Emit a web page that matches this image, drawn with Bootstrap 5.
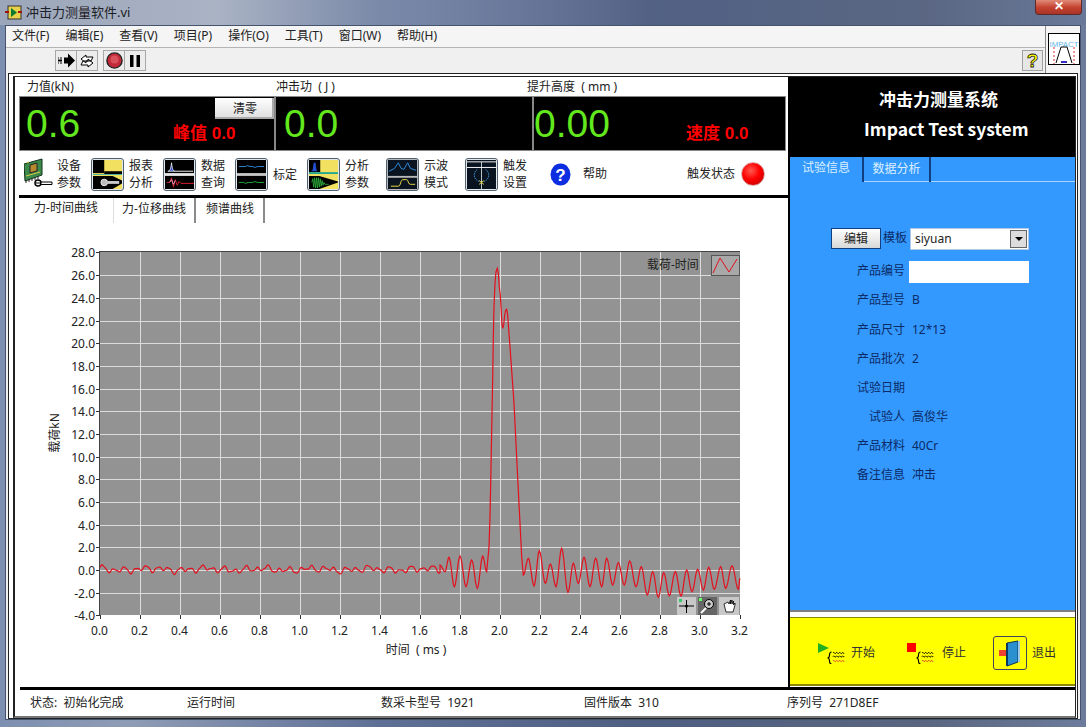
<!DOCTYPE html>
<html lang="zh-CN">
<head>
<meta charset="UTF-8" />
<title>冲击力测量软件.vi</title>
<link href="https://cdn.jsdelivr.net/npm/bootstrap@5.3.3/dist/css/bootstrap.min.css" rel="stylesheet" />
<style>
  html, body { height: 727px; overflow: hidden; }
  body {
    margin: 0;
    background: linear-gradient(90deg, #7d8fb0 0, #8f9cb6 12%, #5f7096 35%, #4f5f82 60%, #5a6680 85%, #6d7c9c 100%);
    font-family: "Noto Sans", "Noto Sans CJK SC", sans-serif;
    font-size: 12px;
    line-height: 1.2;
    color: #222;
  }
  /* title bar */
  .titlebar { height: 25px; padding-left: 5px; font-size: 13px; color: #1c2026;
    background: linear-gradient(90deg, #9ba6ba 0, #aab3c4 20%, #7a89a8 35%, rgba(90,105,140,.2) 60%); }
  .closebtn { width: 47px; height: 15px; margin-right: 4px; margin-top: -10px; border: 1px solid #5c2a2a; border-top: 0;
    border-radius: 0 0 4px 4px; background: linear-gradient(#e08a78, #c4402e 55%, #a83428);
    color: #fff; font: bold 12px/13px "Liberation Sans", sans-serif; text-align: center; }
  /* window */
  .winframe { height: 695px; margin: 0 5px; border: 1px solid #46536c; background: #f0f0f0; }
  .headrow { height: 47px; }
  .menurow { height: 22px; padding-left: 6px; background: #f5f5f5; border-bottom: 1px solid #b4b4b4; }
  .menuitem { margin-right: 16px; }
  .toolrow { height: 25px; padding-left: 50px; background: #f0f0f0; }
  .tbtn { width: 22px; height: 21px; border: 1px solid #a8a8a8; background: #ececec; display: flex; align-items: center; justify-content: center; margin-left: -1px; }
  .tspace { margin-left: 5px; }
  .helpbtn { width: 21px; height: 21px; margin-right: 2px; border: 1px solid #a0a0a0; background: #e6e6e6; color: #ffff00;
    font: bold 19px/19px "Liberation Sans", sans-serif; text-align: center; -webkit-text-stroke: .8px #222; }
  .logocell { width: 35px; border-left: 1px solid #8a8a8a; background: #f4f4f4; padding: 7px 1px 0 2px; }
  /* panel */
  .panelbox { height: 646px; margin: 0 2px; border: 1px solid #222; background: #fff; padding: 2px 1px 0 4px; }
  .panelinner { border: 1px solid #222; border-left-width: 2px; border-bottom: 2px solid #777; border-top: 1px solid #222; padding-left: 4px; height: 642px; }
  .mainrow { height: 610px; }
  .leftcol { width: 771px; border-right: 2px solid #000; }
  .lblrow { height: 19px; font-size: 12px; }
  .lblcell1 { width: 257px; padding: 3px 0 0 8px; }
  .lblcell2 { width: 251px; padding-top: 3px; }
  .readrow { height: 55px; margin-right: 2px; background: #000; border: 1px solid #888; }
  .readcell { position: relative; border-right: 2px solid #888; color: #63e81e; font: 39px/54px "Liberation Sans", sans-serif; padding-left: 6px; }
  .readcell:last-child { border-right: 0; }
  .rc1 { width: 256px; } .rc2 { width: 258px; padding-left: 8px; } .rc3 { flex: 1; padding-left: 0; }
  .peak { position: absolute; bottom: 6px; color: #f00; font: bold 17px/20px "Liberation Sans", "Noto Sans CJK SC", sans-serif; }
  .peak1 { left: 153px; } .peak3 { left: 152px; }
  .zerobtn { position: absolute; right: 0; top: 1px; width: 59px; height: 21px; padding: 0; border: 0; border-radius: 0;
    background: linear-gradient(#fff, #ddd); color: #222; font-size: 12px; line-height: 20px; box-shadow: inset -2px -2px 0 #aaa; }
  .iconrow { height: 47px; padding: 2px 0 0 5px; border-bottom: 3px solid #000; }
  .ticon { width: 33px; height: 33px; padding: 1px; border: 1px solid #4f6070; border-radius: 3px; background: #e4e8ea; flex: none; overflow: hidden; }
  .ticon svg { display: block; }
  .ticongray { background: #b8b8b8; }
  .ttext { line-height: 17px; }
  .s5 { margin-left: 5px; } .s10 { margin-left: 10px; } .s17 { margin-left: 17px; } .s23 { margin-left: 23px; } .s12 { margin-left: 12px; }
  .led { width: 24px; height: 24px; margin: 0 23px 0 6px; border-radius: 50%; border: 1px solid #e0b0b0;
    background: radial-gradient(circle at 40% 35%, #ff5a50 0, #f00 45%, #b00000 100%); }
  .chrometabs { height: 25px; border: 0; padding-left: 0; }
  .chrometabs .nav-link { height: 25px; padding: 4px 0 0; border: 0; border-radius: 0; color: #222; background: #fff; font-size: 12px; text-align: center; margin: 0; }
  .chrometabs .tab1 { width: 94px; padding-top: 3px; }
  .chrometabs .tab2 { width: 83px; border-left: 1px solid #ddd; border-right: 2px solid #8a8a8a; }
  .chrometabs .tab3 { width: 69px; border-right: 2px solid #8a8a8a; padding-left: 1px; }
  .chartbox { height: 464px; }
  /* right */
  .rightcol { flex: 1; }
  .sysbox { height: 80px; background: #000; color: #fff; font: bold 17px/30px "Noto Sans CJK SC", sans-serif; padding-top: 7px; }
  .sysline1 { padding-left: 89px; }
  .sysline2 { padding-left: 74px; font-size: 17.5px; }
  .bluebox { height: 455px; background: #3399ff; color: #0c2a66; border-bottom: 2px solid #7f7f7f; }
  .bluetabs { height: 25px; border-bottom: 1px solid #a8d4ff; padding-left: 0; }
  .bluetabs .nav-link { height: 25px; padding: 4px 0 0; border: 0; border-radius: 0; color: #dcefff; background: transparent; font-size: 12px; }
  .bluetabs .btab1 { width: 74px; border-right: 2px solid #123f80; text-align: center; margin-bottom: -1px; background: #3399ff; }
  .bluetabs .btab2 { width: 67px; border-right: 2px solid #123f80; text-align: center; padding-top: 5px; }
  .formarea { padding-top: 45px; }
  .editrow { height: 23px; padding-left: 41px; margin-bottom: 7px; }
  .editbtn { width: 50px; height: 21px; padding: 0; border: 1px solid #123f80; border-radius: 0; background: linear-gradient(#fff, #d8d8d8); color: #222; font-size: 12px; margin-right: 2px; }
  .selwrap { position: relative; margin-left: 3px; width: 119px; }
  .selwrap .form-select { height: 22px; min-height: 0; padding: 0 0 0 4px; border: 1px solid #b0c8e8; border-radius: 0; background-image: none; font-size: 12px; line-height: 20px; color: #222; }
  .selarrow { position: absolute; top: 2px; right: 2px; width: 17px; height: 18px; background: #ddd; border: 1px solid #666; pointer-events: none; }
  .selarrow::after { content: ""; position: absolute; left: 4px; top: 6px; border: 4px solid transparent; border-top: 4px solid #000; }
  .frow { height: 29.1px; }
  .flabel { width: 115px; text-align: right; margin-right: 7px; flex: none; }
  .frow .form-control { width: 120px; height: 22px; min-height: 0; padding: 0; border: 0; border-radius: 0; margin-left: -3px; }
  .yellowbox { height: 69px; margin-top: 5px; background: #ffff00; border: 1px solid #8a8a00; border-width: 1px 0 2px 0; color: #333; padding: 4px 0 0 28px; }
  .ytext { margin-left: 6px; }
  .ytext2 { margin-left: 8px; }
  .ystop { margin-left: 32px; }
  .yexit { margin-left: 27px; }
  .exitbtn { width: 34px; height: 34px; border: 1px solid #445; border-radius: 3px; display: flex; align-items: center; justify-content: center; }
  .statusrow { height: 29px; border-top: 3px solid #000; margin-left: 1px; padding-top: 6px; }
  .st1 { width: 167px; padding-left: 10px; } .st2 { width: 194px; } .st3 { width: 203px; } .st4 { width: 203px; }
</style>
</head>
<body>
  <div class="titlebar d-flex align-items-center">
    <svg width="17" height="15" viewBox="0 0 17 15" class="me-1"><rect x="3" y="1" width="13" height="13" fill="#e8d048" stroke="#333"/><path d="M6 3l6 4.500-6 4.500z" fill="#0a7a30"/><path d="M0 7h4M13 7h4" stroke="#a01010" stroke-width="2"/></svg>
    <span>冲击力测量软件.vi</span>
    <div class="closebtn ms-auto">✕</div>
  </div>

  <div class="winframe">
    <div class="headrow d-flex">
      <div class="flex-grow-1">
        <div class="menurow d-flex align-items-center">
          <span class="menuitem">文件(F)</span><span class="menuitem">编辑(E)</span><span class="menuitem">查看(V)</span><span class="menuitem">项目(P)</span><span class="menuitem">操作(O)</span><span class="menuitem">工具(T)</span><span class="menuitem">窗口(W)</span><span class="menuitem">帮助(H)</span>
        </div>
        <div class="toolrow d-flex align-items-center">
          <div class="tbtn"><svg width="18" height="15" viewBox="0 0 18 14"><path d="M7 4h4V0l7 7-7 7v-4H7z" fill="#000"/><path d="M1 4h1v1H1zM3 4h2v1H3zM1 6h4v2H1zM1 9h1v1H1zM3 9h2v1H3z" fill="#000"/></svg></div>
          <div class="tbtn"><svg width="18" height="16" viewBox="0 0 18 16"><path d="M3 6l5-4v2h7l-2 4H8v2zM15 10l-5 4v-2H3l2-4h5V6z" fill="#fff" stroke="#000"/></svg></div>
          <div class="tbtn tspace"><svg width="17" height="17" viewBox="0 0 17 17"><circle cx="8.500" cy="8.500" r="7.600" fill="#c22a3a" stroke="#222" stroke-width="1.400"/><circle cx="8.500" cy="7.500" r="4" fill="#d8505c"/></svg></div>
          <div class="tbtn"><svg width="12" height="14" viewBox="0 0 12 14"><path d="M1 1h3.500v12H1zM7.500 1H11v12H7.500z" fill="#000"/></svg></div>
          <div class="helpbtn ms-auto">?</div>
        </div>
      </div>
      <div class="logocell">
        <svg width="32" height="32" viewBox="0 0 32 32"><rect x=".5" y=".5" width="31" height="31" fill="#fff" stroke="#000"/><text x="16" y="14" text-anchor="middle" font-family="Liberation Sans" font-size="8" fill="#66b8ea" textLength="29" lengthAdjust="spacingAndGlyphs">IMPACT</text><path d="M6 14v17M26 14v17" stroke="#d03030" stroke-dasharray="2 2"/><path d="M8 30l5-16h6l5 16" fill="none" stroke="#000"/><path d="M13 29h6" stroke="#3030c0" stroke-width="2"/></svg>
      </div>
    </div>

    <div class="panelbox">
      <div class="panelinner">
      <div class="mainrow d-flex">
        <div class="leftcol d-flex flex-column">
          <div class="lblrow d-flex">
            <div class="lblcell1">力值(kN)</div>
            <div class="lblcell2">冲击功&nbsp; ( J )</div>
            <div class="lblcell2">提升高度&nbsp; ( mm )</div>
          </div>
          <div class="readrow d-flex">
            <div class="readcell rc1">0.6
              <div class="peak peak1">峰值 0.0</div>
              <button class="btn zerobtn" type="button">清零</button>
            </div>
            <div class="readcell rc2">0.0</div>
            <div class="readcell rc3">0.00
              <div class="peak peak3">速度 0.0</div>
            </div>
          </div>
          <div class="iconrow d-flex align-items-center">
            <svg width="33" height="33" viewBox="0 0 33 33" class="flex-none">
              <path d="M0 6l18-5v16L1 23z" fill="#3c8a4a" stroke="#14301c"/><path d="M6 7l7-2v8l-7 2z" fill="#b88a30" stroke="#222"/><path d="M3 5l2-1M2 18l14-4" stroke="#d8c848"/><path d="M2 22v3M5 21v3M8 20v3M11 19v3M14 18v3" stroke="#222"/>
              <circle cx="14" cy="25" r="3" fill="#fff" stroke="#000" stroke-width="1.500"/><path d="M12 25h4" stroke="#000"/><path d="M17 24h11v2.500H17z" fill="#fff" stroke="#000"/>
            </svg>
            <div class="ttext">设备<br>参数</div>
            <div class="ticon s10"><svg width="29" height="29" viewBox="0 0 31 31"><rect width="31" height="31" fill="#f2e060"/><rect x="0" y="0" width="12" height="14" fill="#000"/><rect x="12" y="12" width="19" height="3" fill="#000"/><rect y="15" width="31" height="1" fill="#40b0a0"/><path d="M0 17h21l10 5v3l-10 6H0z" fill="#000"/><circle cx="12" cy="24" r="3.500" fill="#bbb" stroke="#eee"/><rect x="15" y="22.500" width="13" height="3" fill="#ccc"/></svg></div>
            <div class="ttext s5">报表<br>分析</div>
            <div class="ticon s10"><svg width="29" height="29" viewBox="0 0 31 31"><rect width="31" height="31" fill="#000"/><rect y="14" width="31" height="3" fill="#e8e8e8"/><path d="M3 12c2 0 3-1 4-9 1 8 2 9 4 9z" fill="#3050d0" stroke="#fff" stroke-width=".8"/><path d="M11 12h19" stroke="#fff"/><path d="M2 24h3l2-5 2 10 2-8 2 6 2-4 2 2h14" fill="none" stroke="#e02030"/><path d="M5 24l2-3 2 5 2-4" fill="none" stroke="#e8a0c0"/></svg></div>
            <div class="ttext s5">数据<br>查询</div>
            <div class="ticon s10"><svg width="29" height="29" viewBox="0 0 31 31"><rect width="31" height="31" fill="#000"/><rect y="14" width="31" height="3" fill="#c8c8c8"/><path d="M2 7h7l2-1 3 1h3l2 1 3-1 7 0" fill="none" stroke="#3090e0"/><path d="M2 24h5l2 1 3-1h5l2-1 3 1 7 0" fill="none" stroke="#20b040"/></svg></div>
            <div class="ttext s5">标定</div>
            <div class="ticon s10"><svg width="29" height="29" viewBox="0 0 31 31"><rect width="31" height="31" fill="#f2e060"/><rect x="0" y="0" width="12" height="13" fill="#000"/><path d="M2 12c2 0 2-1 3-9h2c1 8 1 9 3 9z" fill="#2050d0"/><rect y="13" width="31" height="2" fill="#20a890"/><path d="M0 17h11l20 6v1l-20 7H0z" fill="#000"/><path d="M3 24l1-4 1 9 1-10 1 11 1-11 1 11 1-11 1 10 1-9 1 8 1-6 1 5 1-3 1 2h4" fill="none" stroke="#30c040" stroke-width=".8"/></svg></div>
            <div class="ttext s5">分析<br>参数</div>
            <div class="ticon ticongray s17"><svg width="29" height="29" viewBox="0 0 31 31"><rect width="31" height="17" fill="#0a1420"/><rect y="19" width="31" height="12" fill="#0a1420"/><path d="M1 12l6-3 4-6 3 6 3 1 4-7 3 6 6 2" fill="none" stroke="#3090e0"/><path d="M3 28h8c3 0 2-7 5-7h4c2 0 1 5 4 5h5" fill="none" stroke="#f0e040"/></svg></div>
            <div class="ttext s5">示波<br>模式</div>
            <div class="ticon s17"><svg width="29" height="29" viewBox="0 0 31 31"><rect width="31" height="31" fill="#0a1420"/><path d="M0 2h31M0 8h31" stroke="#fff"/><path d="M15.500 2v29" stroke="#fff" stroke-width=".8"/><path d="M11 10c-5 4-4 11 2 13M20 10c5 4 4 11-2 13" fill="none" stroke="#4098e0" stroke-dasharray="1.500 1"/><path d="M13 26l5-4M13 22l5 4" stroke="#f0e040"/></svg></div>
            <div class="ttext s5">触发<br>设置</div>
            <svg width="21" height="23" viewBox="0 0 21 23" class="s23"><ellipse cx="10.500" cy="11.500" rx="10" ry="11" fill="#0c2ee0"/><text x="10.500" y="17.500" text-anchor="middle" font-family="Liberation Sans" font-size="17" font-weight="bold" fill="#fff">?</text></svg>
            <div class="s12">帮助</div>
            <div class="ms-auto">触发状态</div>
            <div class="led"></div>
          </div>
          <ul class="nav chrometabs">
            <li class="nav-item"><a class="nav-link tab1" href="#">力-时间曲线</a></li>
            <li class="nav-item"><a class="nav-link tab2" href="#">力-位移曲线</a></li>
            <li class="nav-item"><a class="nav-link tab3" href="#">频谱曲线</a></li>
          </ul>
          <div class="chartbox">
            <svg id="chart" width="767" height="464" viewBox="19 223 767 464" font-family="Noto Sans, Noto Sans CJK SC, sans-serif" font-size="12" fill="#222"></svg>
          </div>
        </div>
        <div class="rightcol">
          <div class="sysbox">
            <div class="sysline1">冲击力测量系统</div>
            <div class="sysline2">Impact Test system</div>
          </div>
          <div class="bluebox">
            <ul class="nav bluetabs">
              <li class="nav-item"><a class="nav-link btab1" href="#">试验信息</a></li>
              <li class="nav-item"><a class="nav-link btab2" href="#">数据分析</a></li>
            </ul>
            <div class="formarea">
              <div class="editrow d-flex align-items-center">
                <button class="btn editbtn" type="button">编辑</button>
                <span>模板</span>
                <div class="selwrap"><select class="form-select"><option>siyuan</option></select><span class="selarrow"></span></div>
              </div>
              <div id="formrows"></div>
            </div>
          </div>
          <div class="yellowbox d-flex align-items-center">
            <svg width="27" height="22" viewBox="0 0 27 22"><path d="M0 1l11 5-11 5z" fill="#20b020"/><path d="M13.500 10c-2 0-2 1-2 3s-1 3-2 3c1 0 2 1 2 3s0 3 2 3" fill="none" stroke="#000" stroke-width="1.100"/><path d="M15 11c1.500-2 1.500 2 3 0s1.500 2 3 0 1.500 2 3 0 1.500 2 2 0M15 14.500c1.500-2 1.500 2 3 0s1.500 2 3 0 1.500 2 3 0 1.500 2 2 0" fill="none" stroke="#000"/><path d="M15 19c1.500-2 1.500 2 3 0s1.500 2 3 0 1.500 2 3 0 1.500 2 2 0" fill="none" stroke="#e03030"/></svg>
            <span class="ytext">开始</span>
            <svg width="27" height="22" viewBox="0 0 27 22" class="ystop"><rect x="0" y="1" width="9" height="9" fill="#f00"/><path d="M13.500 10c-2 0-2 1-2 3s-1 3-2 3c1 0 2 1 2 3s0 3 2 3" fill="none" stroke="#000" stroke-width="1.100"/><path d="M15 11c1.500-2 1.500 2 3 0s1.500 2 3 0 1.500 2 3 0 1.500 2 2 0M15 14.500c1.500-2 1.500 2 3 0s1.500 2 3 0 1.500 2 3 0 1.500 2 2 0" fill="none" stroke="#000"/><path d="M15 19c1.500-2 1.500 2 3 0s1.500 2 3 0 1.500 2 3 0 1.500 2 2 0" fill="none" stroke="#e03030"/></svg>
            <span class="ytext2">停止</span>
            <div class="exitbtn yexit"><svg width="26" height="28" viewBox="0 0 26 28"><path d="M10 4l11-2v21l-11 4z" fill="#2a90d0" stroke="#135"/><path d="M21 2h2v21h-2z" fill="#9ec8e8"/><path d="M2 11h9v6H2z" fill="#f04030"/><path d="M10 4v23" stroke="#0a3860" stroke-width="2"/></svg></div>
            <span class="s5">退出</span>
          </div>
        </div>
      </div>
      <div class="statusrow d-flex">
        <div class="st1">状态:&nbsp; 初始化完成</div>
        <div class="st2">运行时间</div>
        <div class="st3">数采卡型号&nbsp; 1921</div>
        <div class="st4">固件版本&nbsp; 310</div>
        <div>序列号&nbsp; 271D8EF</div>
      </div>
      </div>
    </div>
  </div>

  <script>
    // form rows on the blue panel
    const rows = [
      ["产品编号", null], ["产品型号", "B"], ["产品尺寸", "12*13"], ["产品批次", "2"],
      ["试验日期", ""], ["试验人", "高俊华"], ["产品材料", "40Cr"], ["备注信息", "冲击"]
    ];
    document.getElementById("formrows").innerHTML = rows.map(r =>
      `<div class="frow d-flex align-items-center"><div class="flabel">${r[0]}</div>` +
      (r[1] === null ? `<input class="form-control" type="text">` : `<div>${r[1]}</div>`) + `</div>`).join("");

    // plot geometry
    const X0 = 100, Y0 = 570, PX = 200, PY = 11.34, TOP = 252, BOT = 615, RIGHT = 740;
    const tx = t => X0 + t * PX, vy = v => Y0 - v * PY;
    let s = `<rect x="${X0}" y="${TOP}" width="${RIGHT - X0}" height="${BOT - TOP}" fill="#939393"/>`;
    s += `<path d="M${X0 - .5} ${TOP - 1}V${BOT}M${X0} ${TOP - .5}H${RIGHT}" stroke="#444" fill="none"/>`;

    // grid and scale labels
    for (let i = 0; i <= 16; i++) {
      const v = -4 + i * 2, y = Math.round(vy(v)) + .5;
      if (i > 0 && i < 16) s += `<path d="M${X0} ${y}H${RIGHT}" stroke="#dcdcdc"/>`;
      s += `<path d="M${X0 - 4} ${y}H${X0}" stroke="#333"/>`;
      s += `<text x="${X0 - 5}" y="${y + 4}" text-anchor="end">${v.toFixed(1)}</text>`;
    }
    for (let i = 0; i <= 16; i++) {
      const t = i * .2, x = Math.round(tx(t)) + .5;
      if (i > 0 && i < 16) s += `<path d="M${x} ${TOP}V${BOT}" stroke="#dcdcdc"/>`;
      s += `<path d="M${x} ${BOT}v4" stroke="#333"/>`;
      s += `<text x="${x - 1}" y="635" text-anchor="middle">${t.toFixed(1)}</text>`;
    }
    s += `<text x="416" y="654" text-anchor="middle">时间&#160; ( ms )</text>`;
    s += `<text transform="translate(59 433) rotate(-90)" text-anchor="middle">载荷kN</text>`;

    // legend
    s += `<text x="647" y="269">载荷-时间</text>`;
    s += `<rect x="711.5" y="255.5" width="28" height="20" fill="#a8a8a8" stroke="#555"/><path d="M713 273l7-15 9 14 8-13" fill="none" stroke="#e01020"/>`;

    // graph palette
    s += `<rect x="677" y="597" width="19" height="18" fill="#c8c8c8"/><rect x="679" y="599" width="3" height="3" fill="#3c6"/><path d="M679 606h15M686.500 600v13" stroke="#000"/><circle cx="686.500" cy="606" r="1.500" fill="#000"/>`;
    s += `<rect x="698" y="597" width="19" height="18" fill="#666"/><rect x="699" y="598" width="3" height="3" fill="#6f6"/><circle cx="709" cy="604" r="4.500" fill="#ccc" stroke="#000"/><path d="M706 608l-5 5" stroke="#fff" stroke-width="2"/><path d="M707 604h4M709 602v4" stroke="#000"/>`;
    s += `<rect x="719" y="597" width="20" height="18" fill="#c8c8c8"/><path d="M724 604l2 8h7l2-7v-2l-1.500 2v-4l-1.500 3v-4l-1.500 4v-4l-1.500 4-1-2z" fill="#fff" stroke="#000" stroke-width=".8"/>`;

    // trace: small ripple before the hit, then the extrema read from the curve
    const pts = [];
    for (let t = 0; t < 1.70; t += .005) {
      const v = .05 + .2 * Math.sin(t * 114) + .13 * Math.sin(t * 61 + 1) + .08 * Math.sin(t * 23 + 2) + .06 * Math.sin(t * 233);
      pts.push([tx(t), vy(v)]);
    }
    const ex = [[0,945],[15,965],[27,922],[43,1010],[60,918],[78,1010],[95,930],[112,1015],[128,918],[140,965]];
    const rise = [[147,890],[150,800],[152,700],[155,540],[158,380],[160,265],[162,170],[165,100],[168,65],[172,55],[175,70],[178,110],[181,135],[184,190],[186,225],[188,235],[191,225],[194,195],[197,180],[200,178],[203,195],[206,240],[210,290],[222,460],[232,660],[240,820],[245,920],[250,975]];
    const tail = [[265,925],[282,1008],[298,902],[316,1000],[331,942],[348,1010],[365,895],[384,1027],[400,940],[415,1000],[432,922],[450,1010],[467,925],[485,1010],[500,925],[518,1005],[535,938],[553,1005],[569,933],[588,1010],[604,950],[622,1035],[638,965],[655,1042],[671,968],[688,1037],[706,965],[723,1038],[740,960],[756,1025],[773,958],[790,1020],[806,952],[823,1018],[842,950],[857,1015],[876,947],[895,1018],[900,985]];
    const toPlot = e => [440 + e[0] / 3, 250 + e[1] / 3];
    function addWaves(list, prev) {
      list.forEach(e => {
        if (prev) {
          for (let k = 1; k <= 6; k++) {
            const f = (1 - Math.cos(Math.PI * k / 6)) / 2;
            pts.push(toPlot([prev[0] + (e[0] - prev[0]) * k / 6, prev[1] + (e[1] - prev[1]) * f]));
          }
        } else {
          pts.push(toPlot(e));
        }
        prev = e;
      });
    }
    addWaves(ex, null);
    rise.forEach(e => pts.push(toPlot(e)));
    addWaves(tail, rise[rise.length - 1]);
    s += `<polyline fill="none" stroke="#e4101e" stroke-width="1.2" points="${pts.map(p => p[0].toFixed(1) + "," + p[1].toFixed(1)).join(" ")}"/>`;
    document.getElementById("chart").innerHTML = s;
  </script>
  <script src="https://cdn.jsdelivr.net/npm/bootstrap@5.3.3/dist/js/bootstrap.bundle.min.js"></script>
</body>
</html>
